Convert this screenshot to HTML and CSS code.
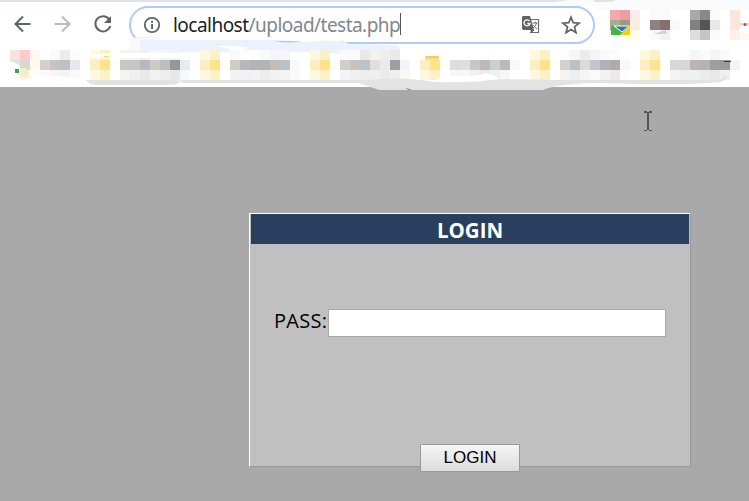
FILE: index.html
```html
<!DOCTYPE html>
<html lang="en">
<head>
<meta charset="utf-8">
<title>LOGIN</title>
<link rel="stylesheet" href="styles.css">
</head>
<body>
<header class="browser">
  <div class="toolbar">
    <svg class="nav" width="22" height="22" viewBox="0 0 22 22"><path d="M18.500 11H4M11 3.500 3.500 11l7.500 7.500" fill="none" stroke="#5f6368" stroke-width="2"/></svg>
    <svg class="nav" width="22" height="22" viewBox="0 0 22 22"><path d="M2.500 11h15M10 3.500 17.500 11 10 18.500" fill="none" stroke="#babcbe" stroke-width="2"/></svg>
    <svg class="nav" width="22" height="22" viewBox="0 0 22 22"><path d="M17.200 6.300A7.600 7.600 0 1 0 18.300 13" fill="none" stroke="#5f6368" stroke-width="2"/><path d="M19 3v7h-7z" fill="#5f6368"/></svg>
    <div class="address">
      <svg class="info" width="18" height="18" viewBox="0 0 18 18"><circle cx="9" cy="9" r="7.200" fill="none" stroke="#5f6368" stroke-width="1.800"/><path d="M8.100 8h1.900v5H8.100zM8.100 4.800h1.900v1.900H8.100z" fill="#5f6368"/></svg>
      <span class="url"><span class="host">localhost</span>/upload/testa.php</span><span class="caret"></span>
      <svg class="translate" width="20" height="20" viewBox="0 0 20 20"><path d="M9 4.500h8.500v13H9" fill="#fff" stroke="#6b6f74" stroke-width="1.200"/><path d="M2 1h7l4 14H2.500Q1 15 1 13V2.500Q1 1 2 1z" fill="#5f6368"/><path d="M9.500 15h4l-3.500 3.500z" fill="#5f6368"/><path d="M8.500 6A3 3 0 1 0 9 8.500H6.300" fill="none" stroke="#fff" stroke-width="1.300"/><path d="M11.500 8h5M14 6.500V8m1.500 0q-.5 3-3.500 5m.5-3q1.500 3 3.500 4" fill="none" stroke="#6b6f74"/></svg>
      <svg class="star" width="20" height="20" viewBox="0 0 20 20"><path d="m10 2.200 2.200 5.500 5.900.4-4.600 3.800 1.500 5.800-5-3.200-5 3.200 1.500-5.800L1.900 8.100l5.900-.4z" fill="none" stroke="#5f6368" stroke-width="1.700"/></svg>
    </div>
  </div>
  <div class="bookmarks"></div>
  <svg class="marks" width="749" height="92" viewBox="0 0 749 92">
    <path d="M567 0h182v10H600l-10-5h-23z" fill="#fafbfd"/>
    <path d="M0 0h567q-5 2-20 2H0z" fill="#dee1e6"/><path d="M594 0h22l-5 2h-17z" fill="#dee1e6"/>
    <path d="M132 38q14-3 28-3v5h-30z" fill="#f7f7f8"/>
    <path d="M140 40h132q24 0 38 3 20 1 34-3l2 4 48 1q7 0 6 6v6l-90-5H140z" fill="#ebf1fe"/>
    <path d="M274 41h28q-14 3-28 0z" fill="#aecbfa"/>
    <path d="M130 39h10v12h-10z" fill="#fafafa"/>
    <path d="M300 43q18-3 35-2 11 0 14 3v4H300z" fill="#ebf1fe"/>
    <g id="mosaic"></g>
    <path d="M217 46q20-1 32 2-10 4-20 1z" fill="#fff"/>
    <path d="M90 54q28-2 90-1v5H94l-4-2z" fill="#fff"/>
    <path d="M104 56h5v1h-5z" fill="#f6d56e"/>
    <path d="M10 61q8 1 11 8l-4 11h-7zM34 77q20-4 46 2v3H29z" fill="#fff"/>
    <circle cx="24" cy="73" r="5" fill="#fdeacb"/><path d="M15 69h4v4h-4z" fill="#35a45f"/>
    <path d="M86 80h92l2 2q-3 3-12 3H98q-9 0-12-5zM179 80h188q35-4 68 2 65-4 121-2h164l5-5q5 3-4 7-40 4-121 1-30 0-52 5l-5 2H379l-20-7H182z" fill="#e3e3e3"/>
    <path d="M250 84q55-2 105 0l14 3H250z" fill="#fff"/>
    <path d="M435 82q5-6 15-6 29 1 35-3 10 2 15 6-30 4-65 3z" fill="#fff"/>
    <path d="M425 60v-3l1-1h12l1 1v3z" fill="#fbe08a"/><path d="M425 57l1-1h12l1 1v1h-14z" fill="#f2cd58"/>
    <path d="M406 88q1 1 5 2" fill="none" stroke="#888"/>
    <path d="M724 61.500h7" fill="none" stroke="#343b45"/>
    <path d="M611 26h19l-1 9h-18z" fill="#45b346"/><path d="m614 26 8 6 7-6z" fill="#3274ad" stroke="#fff"/><path d="m629 26-9 9h10v-9z" fill="#fccf0c"/>
    <path d="m653 34 13-4 1 4z" fill="#d3d3d3"/>
    <path d="m739 28 7-10h3M745 19l4-1v15h-10v-3z" fill="#fff"/><path d="M740 24h9" stroke="#f1a58b"/><circle cx="745" cy="24.500" r="1.500" fill="#dc4412"/>
  </svg>
</header>
<main class="page">
  <svg class="cursor" width="8" height="20" viewBox="0 0 8 20"><path d="M0 0h3v1h2V0h3v2H5v17h3v1H5v-1H3v1H0v-1h3V2H0z" fill="#555"/></svg>
  <form class="panel" onsubmit="return false">
    <h1 class="title">LOGIN</h1>
    <div class="field"><label for="pass">PASS:</label><input id="pass" type="password"></div>
    <button class="submit">LOGIN</button>
  </form>
</main>
<script src="mosaic.js"></script>
</body>
</html>
```
FILE: styles.css
```css
* { box-sizing: border-box; }
body { margin: 0; height: 501px; overflow: hidden; background: #a9a9a9; font-family: "Open Sans", sans-serif; }
.browser { position: relative; height: 87px; background: #fff; }
.toolbar { display: flex; align-items: center; height: 50px; padding: 0 0 2px 12px; }
.nav { flex: none; margin-right: 18px; }
.nav:nth-child(3) { margin-right: 15px; }
.address { display: flex; align-items: center; width: 466px; height: 38px; margin-top: 2px; padding: 0 11px 0 12px; border: 2px solid #aecbfa; border-radius: 19px; background: #fff; }
.info { margin-right: 12px; }
.url { color: #80868b; font-family: "Noto Sans", sans-serif; font-size: 19px; line-height: 24px; letter-spacing: -0.53px; white-space: nowrap; }
.host { color: #202124; }
.caret { width: 1px; height: 22px; margin-top: -3px; background: #555; }
.translate { margin-left: auto; margin-right: 20px; }
.star { margin-right: 1px; }
.bookmarks { height: 37px; }
.marks { position: absolute; top: 0; left: 0; }
.page { position: relative; height: 414px; padding: 126px 0 0 249px; }
.cursor { position: absolute; left: 644px; top: 24px; }
.panel { width: 442px; height: 254px; display: flex; flex-direction: column; background: #c0c0c0; border: 1px solid; border-color: #fff #999 #999 #fff; }
.title { margin: 0 1px; height: 30px; line-height: 32px; background: #293f5f; color: #fff; font-size: 20.5px; font-weight: 700; text-align: center; }
.field { display: flex; align-items: center; height: 28px; margin: 65px 24px 0 25px; font-size: 20px; color: #000; }
.field label { width: 53px; flex: none; white-space: nowrap; line-height: 24px; letter-spacing: 0.3px; margin-top: -5px; margin-left: -1px; margin-right: 1px; }
.field input { width: 338px; height: 28px; padding: 0 4px; border: 1px solid #a9a9a9; background: #fff; outline: 0; }
.submit { flex: none; align-self: center; width: 100px; height: 28px; margin-top: 107px; padding: 0; border: 1px solid #999; border-radius: 1px; background: linear-gradient(#f5f5f5, #dcdcdc); color: #000; font: 17px/24px "Liberation Sans", sans-serif; }
```
FILE: mosaic.js
```js
// Each run: x, y, then one colour per 10px cell.
const runs = [
  "10 50 ffe0e0 ffcac9 fff5f5 fefefe fafafa ebebeb fafcff",
  "10 60 d2e9de d9dacb fef9ec d5d0ce cbc1c0 b9c2c6 e7e7ec",
  "10 70 ffffff fff7ea fffdf8 fafafa f7f5f5 f4f4f4 f9fafc",
  "120 50 f5f5f5 f4f4f5 f0f0f0 f7f7f7 f5f5f5 f3f3f3",
  "120 60 c9c7c6 c6c6c2 bbb6bf cbcbc4 bdbdc2 979694 e6ebef",
  "120 70 f3f3f3 f0f0f0 e9e9e9 f1f1f0 eeeeee e8e8e8 f7f8f9",
  "230 50 fafafa fefefe fefefe fafafa f3f5f8 f6f6f8",
  "230 60 d1cbc7 b6b8be b3b3b3 b3b3b2 c2bcba bcc0c7 f8f9fd",
  "230 70 f3f2f2 eff1f4 f3f3f3 ededed f1f1f1 f4f4f4 fafafa",
  "340 50 fafafa fafafa e9e9e9 f2f2f0 eeeeee e9e9ea",
  "340 60 d1cdcb c7c2be b9c2c5 e5ddd8 e7eaee 9d9ea0 eff5fb",
  "340 70 f4f4f4 f1f0f0 eeeeef f0efef ebebeb eeeeee f8f8f8",
  "450 60 dedcdd dfdfdf c7c8c6 bfb7ba cad0d0 b8babc f6f8fd",
  "450 70 f7f7f7 f6f6f6 f1f1f1 ebebeb f0f0f0 f6f6f6",
  "560 50 fcfcfc f6f6f6 ebecec f5f5f5 fafafa fcfcfc",
  "560 60 d5d0cd bdbfc6 dfdad3 c5c3cb b3b1b6 b1a9aa f2fafa",
  "560 70 f5f3f2 eeeeee f5f5f5 fafafa f2f2f3 eaeaea fdfdfd",
  "670 50 fdfdfd fcfcfc f6f6f6 fafafa f5f5f5 fafafa",
  "670 60 d8d7d6 d8d7d6 bab3bb b5b4b0 9e9ea0 9a9a9c f2f4f7",
  "670 70 f4f4f4 efefef f0f0ef ebebeb e8e8e8 f0f0f0",
  "610 10 f3a8ab ec9fa2 fcebed",
  "610 20 9ab38b 9b9a7c fdeedb",
  "630 30 fffde9",
  "650 10 fafafa fafafa",
  "650 20 8e8180 866e6c fafafa",
  "650 30 fafafa f2f2f2",
  "690 10 a9a9a9 898989 fafafa",
  "690 20 818181 555555 e8e8e8",
  "690 30 dedede c5c5c5 fbfbfb",
  "730 10 fce6dc ffffff",
  "730 20 fce6dc fef8f4",
  "730 30 fbf0ea fdf8f6"
];
for (const x of [90, 200, 310, 420, 530, 640]) {
  if (x !== 420) runs.push(`${x} 50 fff7df fcf0c5`);
  runs.push(`${x} 60 fdeebf fce38c fefef8`, `${x} 70 fff7df fdf1ca`);
}
const group = document.getElementById("mosaic");
for (const run of runs) {
  const [x, y, ...colors] = run.split(" ");
  colors.forEach((color, i) => {
    const cell = document.createElementNS("http://www.w3.org/2000/svg", "rect");
    cell.setAttribute("x", Number(x) + i * 10);
    cell.setAttribute("y", y);
    cell.setAttribute("width", 10);
    cell.setAttribute("height", 10);
    cell.setAttribute("fill", "#" + color);
    group.append(cell);
  });
}
```
